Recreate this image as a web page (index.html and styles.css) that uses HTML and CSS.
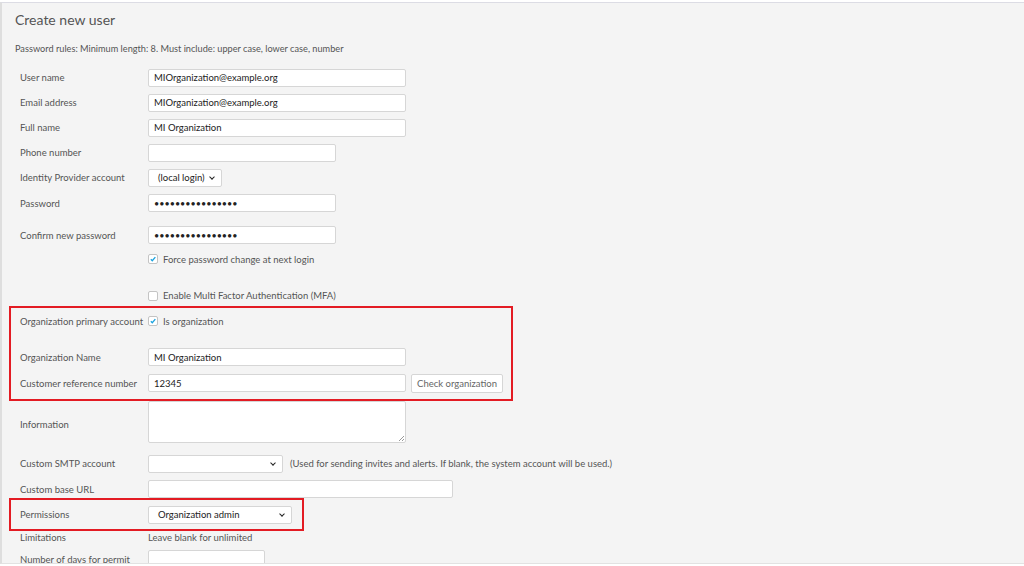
FILE: index.html
```html
<!DOCTYPE html>
<html>
<head>
<meta charset="utf-8">
<link rel="stylesheet" href="styles.css">
</head>
<body>
<div class="panel">
  <h1 class="title">Create new user</h1>
  <p class="rules">Password rules: Minimum length: 8. Must include: upper case, lower case, number</p>
  <div class="form">
    <div class="row r-user"><label class="lbl">User name</label><input class="inp w258" type="text" value="MIOrganization@example.org"></div>
    <div class="row r-std"><label class="lbl">Email address</label><input class="inp w258" type="text" value="MIOrganization@example.org"></div>
    <div class="row r-std"><label class="lbl">Full name</label><input class="inp w258" type="text" value="MI Organization"></div>
    <div class="row r-std"><label class="lbl">Phone number</label><input class="inp w188" type="text" value=""></div>
    <div class="row r-std"><label class="lbl">Identity Provider account</label><div class="sel w74"><span class="sel-text">(local login)</span><span class="chev"></span></div></div>
    <div class="row r-pass"><label class="lbl">Password</label><input class="inp w188 pw" type="password" value="abcdefghijklmnop"></div>
    <div class="row r-conf"><label class="lbl">Confirm new password</label><input class="inp w188 pw" type="password" value="abcdefghijklmnop"></div>
    <div class="row r-force"><span class="lbl"></span><span class="cb on"><svg viewBox="0 0 10 10" width="10" height="10"><path d="M2.3 5.3 L4.1 7.2 L7.9 2.6" fill="none" stroke="#1aa3df" stroke-width="1.6"/></svg></span><span class="cbtext">Force password change at next login</span></div>
    <div class="row r-mfa"><span class="lbl"></span><span class="cb"></span><span class="cbtext">Enable Multi Factor Authentication (MFA)</span></div>
    <div class="box box1">
      <div class="row r-orgp"><label class="lbl">Organization primary account</label><span class="cb on"><svg viewBox="0 0 10 10" width="10" height="10"><path d="M2.3 5.3 L4.1 7.2 L7.9 2.6" fill="none" stroke="#1aa3df" stroke-width="1.6"/></svg></span><span class="cbtext">Is organization</span></div>
      <div class="row r-orgn"><label class="lbl">Organization Name</label><input class="inp w258" type="text" value="MI Organization"></div>
      <div class="row r-std"><label class="lbl">Customer reference number</label><input class="inp w258" type="text" value="12345"><button class="btn">Check organization</button></div>
    </div>
    <div class="row r-info"><label class="lbl">Information</label><div class="ta"><span class="grip"></span></div></div>
    <div class="row r-smtp"><label class="lbl">Custom SMTP account</label><div class="sel w135"><span class="sel-text"></span><span class="chev"></span></div><span class="note">(Used for sending invites and alerts. If blank, the system account will be used.)</span></div>
    <div class="row r-url"><label class="lbl">Custom base URL</label><input class="inp w305" type="text" value=""></div>
    <div class="box box2">
      <div class="row r-perm"><label class="lbl">Permissions</label><div class="sel w144"><span class="sel-text">Organization admin</span><span class="chev"></span></div></div>
    </div>
    <div class="row r-lim"><label class="lbl">Limitations</label><span class="plain">Leave blank for unlimited</span></div>
    <div class="row r-days"><label class="lbl">Number of days for permit</label><input class="inp w117" type="text" value=""></div>
  </div>
</div>
</body>
</html>
```

FILE: styles.css
```css
* { box-sizing: border-box; }
html, body { margin: 0; padding: 0; background: #ffffff; }
body {
  font-family: "Lato", "Open Sans", "Liberation Sans", sans-serif;
  font-size: 9.5px;
  color: #555;
}
.panel {
  margin-top: 2px;
  height: 562px;
  background: #f4f4f4;
  border-top: 1px solid #dcdce4;
  border-bottom: 1px solid #e2e2e2;
  border-left: 2px solid #dedede;
  overflow: hidden;
}
.title {
  margin: 0;
  padding: 9px 0 0 13px;
  height: 36px;
  font-size: 14px;
  font-weight: 400;
  color: #555;
  line-height: 16px;
}
.rules {
  margin: 0;
  padding-left: 13px;
  height: 26px;
  line-height: 20px;
  font-size: 9.2px;
  color: #555;
}
.form { padding-left: 7px; }
.row {
  display: flex;
  align-items: center;
  padding-left: 11px;
}
.lbl {
  width: 128px;
  flex: none;
  color: #555;
}
.r-user { height: 25px; }
.r-std { height: 25px; }
.r-pass { height: 26px; }
.r-conf { height: 26px; margin-top: 6px; }
.r-force { height: 22px; }
.r-mfa { height: 21px; margin-top: 15px; }
.box {
  border: 2px solid #e31b23;
  width: 504px;
}
.box1 { height: 95px; }
.r-orgp { height: 26px; padding-left: 9px; }
.r-orgn { height: 26px; margin-top: 10px; padding-left: 9px; }
.box1 .r-std { height: 26px; padding-left: 9px; }
.r-info { height: 46px; }
.r-info .ta { align-self: flex-start; }
.r-smtp { height: 33px; }
.r-url { height: 18px; }
.box2 { width: 295px; height: 33px; }
.r-perm { height: 29px; padding-left: 9px; }
.r-lim { height: 13px; }
.r-days { height: 22px; margin-top: 4px; }

.inp {
  height: 18px;
  border: 1px solid #d6d6d6;
  border-radius: 2px;
  background: #fff;
  font-family: inherit;
  font-size: 9.5px;
  color: #222;
  padding: 0 5px;
  outline: none;
}
.pw { font-size: 9px; letter-spacing: 0px; }
.w258 { width: 258px; }
.w188 { width: 188px; }
.w305 { width: 305px; }
.w117 { width: 117px; }

.sel {
  position: relative;
  height: 18px;
  border: 1px solid #d6d6d6;
  border-radius: 2px;
  background: #fff;
  color: #222;
  display: flex;
  align-items: center;
  padding-left: 9px;
}
.w74 { width: 74px; }
.w135 { width: 135px; }
.w144 { width: 144px; }
.chev {
  position: absolute;
  right: 7px;
  top: 5px;
  width: 4px;
  height: 4px;
  border-right: 1.6px solid #222;
  border-bottom: 1.6px solid #222;
  transform: rotate(45deg);
}
.cb {
  width: 10px;
  height: 10px;
  border: 1px solid #c4c4c4;
  border-radius: 2px;
  background: #fff;
  flex: none;
  display: flex;
  align-items: center;
  justify-content: center;
}
.cb svg { display: block; }
.cbtext { margin-left: 5px; color: #555; }
.btn {
  margin-left: 5px;
  height: 19px;
  width: 92px;
  border: 1px solid #d6d6d6;
  border-radius: 2px;
  background: #fff;
  font-family: inherit;
  font-size: 9.5px;
  color: #666;
  padding: 0;
}
.ta {
  position: relative;
  width: 258px;
  height: 42px;
  border: 1px solid #d6d6d6;
  border-radius: 2px;
  background: #fff;
}
.grip {
  position: absolute;
  right: 1px;
  bottom: 1px;
  width: 5px;
  height: 5px;
  background: linear-gradient(135deg, transparent 45%, #999 45%, #999 55%, transparent 55%, transparent 75%, #999 75%, #999 85%, transparent 85%);
}
.note { margin-left: 7px; color: #555; }
.plain { color: #555; }
```
